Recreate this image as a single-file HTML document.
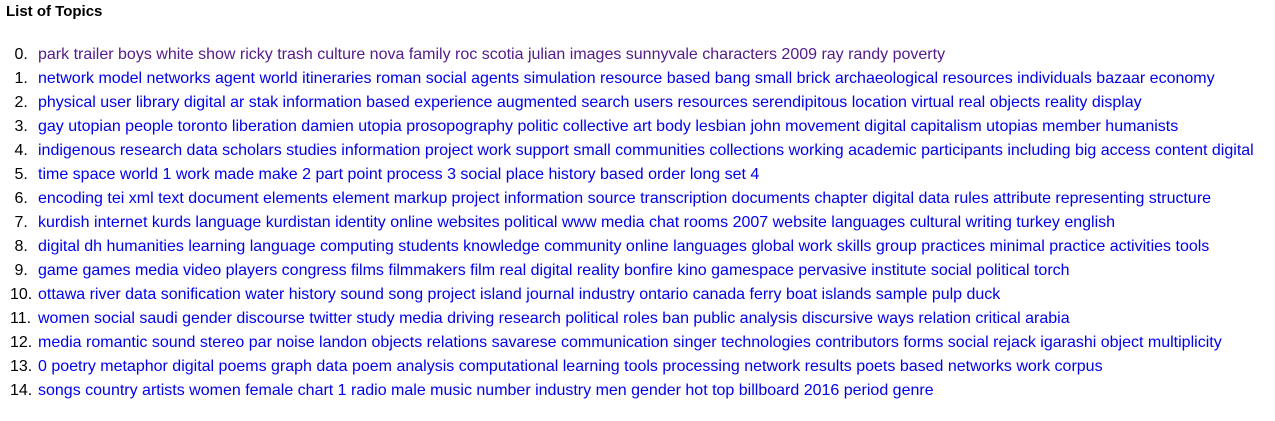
<html><head><style>
body{margin:0;background:#fff;font-family:"Liberation Sans",Arial,sans-serif;}
h1{position:absolute;left:6px;top:2px;margin:0;font-size:15px;font-weight:bold;color:#000;line-height:20px}
.r{position:absolute;left:0;height:24px;line-height:24px;font-size:16px;white-space:nowrap}
.n{position:absolute;left:10px;color:#000}
.t{position:absolute;left:38px;color:#00e}
</style></head><body>
<h1>List of Topics</h1>
<div class="r" style="top:43px"><span class="n">&nbsp;0.</span><span class="t" style="color:#551a8b">park trailer boys white show ricky trash culture nova family roc scotia julian images sunnyvale characters 2009 ray randy poverty</span></div>
<div class="r" style="top:67px"><span class="n">&nbsp;1.</span><span class="t">network model networks agent world itineraries roman social agents simulation resource based bang small brick archaeological resources individuals bazaar economy</span></div>
<div class="r" style="top:91px"><span class="n">&nbsp;2.</span><span class="t">physical user library digital ar stak information based experience augmented search users resources serendipitous location virtual real objects reality display</span></div>
<div class="r" style="top:115px"><span class="n">&nbsp;3.</span><span class="t">gay utopian people toronto liberation damien utopia prosopography politic collective art body lesbian john movement digital capitalism utopias member humanists</span></div>
<div class="r" style="top:139px"><span class="n">&nbsp;4.</span><span class="t">indigenous research data scholars studies information project work support small communities collections working academic participants including big access content digital</span></div>
<div class="r" style="top:163px"><span class="n">&nbsp;5.</span><span class="t">time space world 1 work made make 2 part point process 3 social place history based order long set 4</span></div>
<div class="r" style="top:187px"><span class="n">&nbsp;6.</span><span class="t">encoding tei xml text document elements element markup project information source transcription documents chapter digital data rules attribute representing structure</span></div>
<div class="r" style="top:211px"><span class="n">&nbsp;7.</span><span class="t">kurdish internet kurds language kurdistan identity online websites political www media chat rooms 2007 website languages cultural writing turkey english</span></div>
<div class="r" style="top:235px"><span class="n">&nbsp;8.</span><span class="t">digital dh humanities learning language computing students knowledge community online languages global work skills group practices minimal practice activities tools</span></div>
<div class="r" style="top:259px"><span class="n">&nbsp;9.</span><span class="t">game games media video players congress films filmmakers film real digital reality bonfire kino gamespace pervasive institute social political torch</span></div>
<div class="r" style="top:283px"><span class="n">10.</span><span class="t">ottawa river data sonification water history sound song project island journal industry ontario canada ferry boat islands sample pulp duck</span></div>
<div class="r" style="top:307px"><span class="n">11.</span><span class="t">women social saudi gender discourse twitter study media driving research political roles ban public analysis discursive ways relation critical arabia</span></div>
<div class="r" style="top:331px"><span class="n">12.</span><span class="t">media romantic sound stereo par noise landon objects relations savarese communication singer technologies contributors forms social rejack igarashi object multiplicity</span></div>
<div class="r" style="top:355px"><span class="n">13.</span><span class="t">0 poetry metaphor digital poems graph data poem analysis computational learning tools processing network results poets based networks work corpus</span></div>
<div class="r" style="top:379px"><span class="n">14.</span><span class="t">songs country artists women female chart 1 radio male music number industry men gender hot top billboard 2016 period genre</span></div>
</body></html>
